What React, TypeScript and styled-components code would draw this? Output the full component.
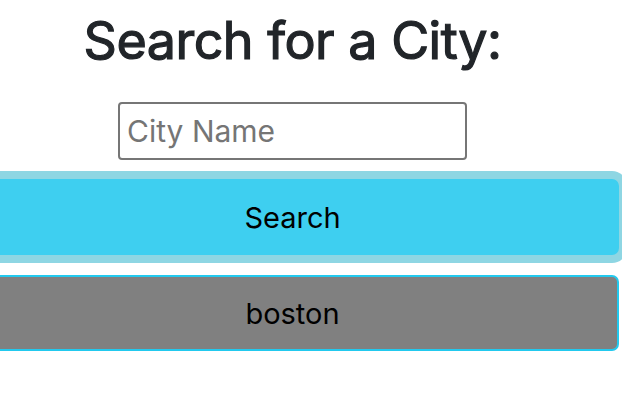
import React from "react";
import styled, { createGlobalStyle } from "styled-components";

const Global = createGlobalStyle`
  html, body { margin: 0; padding: 0; background: #ffffff; overflow: hidden; }
  body { font-family: Inter, "Liberation Sans", Arial, sans-serif; }
`;

const Page = styled.div`
  width: 653px;
  margin-left: -34px;
  display: flex;
  flex-direction: column;
  align-items: center;
`;

const Title = styled.h1`
  margin: 10px 0 0;
  font-family: Inter, "Liberation Sans", Arial, sans-serif;
  font-weight: 400;
  font-size: 52px;
  line-height: 1.2;
  color: #212529;
  letter-spacing: -0.5px;
  -webkit-text-stroke: 1.2px #212529;
`;

const CityInput = styled.input`
  box-sizing: border-box;
  margin-top: 30px;
  width: 349px;
  height: 58px;
  border: 2px solid #767676;
  border-radius: 4px;
  padding: 0 7px;
  font-family: Inter, "Liberation Sans", Arial, sans-serif;
  font-size: 30px;
  color: #212529;
  outline: none;
  &::placeholder { color: #757575; }
`;

const Button = styled.button<{ $variant: "search" | "city"; $focused?: boolean }>`
  box-sizing: border-box;
  width: 100%;
  height: 76px;
  border-radius: 7px;
  border: 2px solid ${(p) => (p.$variant === "search" ? "#3ecff0" : "#22c9ee")};
  background: ${(p) => (p.$variant === "search" ? "#3ecff0" : "#808080")};
  color: #000000;
  font-family: Inter, "Liberation Sans", Arial, sans-serif;
  font-size: 29px;
  font-weight: 400;
  cursor: pointer;
  box-shadow: ${(p) => (p.$focused ? "0 0 0 8px #8ed6e3" : "none")};
`;

const Buttons = styled.div`
  width: 100%;
  margin-top: 19px;
  display: flex;
  flex-direction: column;
  gap: 20px;
`;

export default function App() {
  return (
    <>
      <Global />
      <Page>
        <Title>Search for a City:</Title>
        <CityInput placeholder="City Name" />
        <Buttons>
          <Button $variant="search" $focused>Search</Button>
          <Button $variant="city">boston</Button>
        </Buttons>
      </Page>
    </>
  );
}
